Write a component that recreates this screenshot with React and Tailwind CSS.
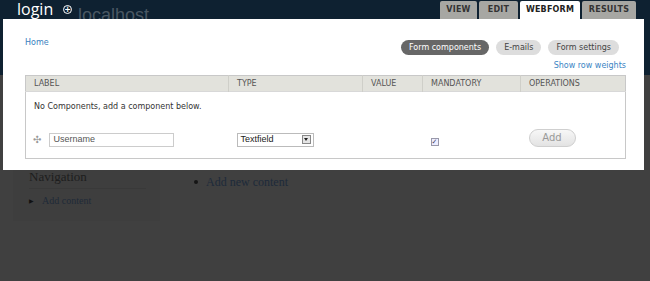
import React from "react";

const tabs = [
  { label: "VIEW", w: "w-[37px]" },
  { label: "EDIT", w: "w-[39px]" },
  { label: "WEBFORM", w: "w-[60px]", active: true },
  { label: "RESULTS", w: "w-[54px]" },
];

const App = () => {
  return (
    <div className="relative w-[650px] h-[281px] overflow-hidden bg-[#404040]">
      {/* page behind the overlay */}
      <div className="h-[75px] bg-[#0e2131] pl-[78px] pt-[3px]">
        <span className="text-[18px] leading-[22px] text-[#4a5863] font-['Liberation_Sans',sans-serif]">
          localhost
        </span>
      </div>
      <div className="flex pt-[93px] font-['Liberation_Serif',serif]">
        <div className="ml-[13px] w-[147px] h-[53px] bg-[#3e3e3e] pl-[16px] pr-[14px]">
          <div className="text-[13px] leading-[16px] text-[#1d1d1d] border-b border-[#393939] pb-[3px] pt-[1px]">
            Navigation
          </div>
          <div className="flex items-center gap-[8px] mt-[5px] text-[10px] leading-[14px] text-[#1f2a38]">
            <span className="text-[6px] text-[#111]">▶</span>
            <span>Add content</span>
          </div>
        </div>
        <div className="ml-[34px] flex items-center gap-[8px] text-[12px] leading-[16px] text-[#1d2a3a] h-[16px] mt-[6px]">
          <span className="w-[4px] h-[4px] rounded-full bg-[#151515]"></span>
          <span>Add new content</span>
        </div>
      </div>

      {/* overlay */}
      <div className="absolute top-0 left-0 w-[650px] font-['DejaVu_Sans',sans-serif]">
        <div className="h-[19px] flex items-end">
          <div className="flex items-center h-[19px] pl-[17px]">
            <span className="text-[16px] leading-[18px] text-white font-['Open_Sans',sans-serif] -mt-[2px]">login</span>
            <span className="ml-[10px] w-[9px] h-[9px] rounded-full border border-white flex items-center justify-center text-white text-[8px] leading-none font-bold">
              +
            </span>
          </div>
          <div className="ml-auto mr-[14px] flex gap-[2px] h-[18px]">
            {tabs.map((t) => (
              <div
                key={t.label}
                className={`${t.w} h-[18px] flex items-center justify-center text-[8px] font-bold tracking-[0.2px] rounded-t-[2px] ${
                  t.active ? "bg-white text-[#222]" : "bg-[#a7a7a3] text-[#333]"
                }`}
              >
                {t.label}
              </div>
            ))}
          </div>
        </div>
        <div className="ml-[3px] w-[641px] h-[151px] bg-white pl-[22px] pr-[18px] pt-[17px]">
          <div className="flex items-start">
            <a className="text-[8px] leading-[12px] text-[#3a7fbe] mt-[1px]">Home</a>
            <div className="ml-auto mr-[7px] flex gap-[7px] text-[8px] mt-[4px]">
              <span className="h-[15px] px-[8px] rounded-full bg-[#676767] text-white flex items-center">Form components</span>
              <span className="h-[15px] px-[8px] rounded-full bg-[#dddddd] text-[#444] flex items-center">E-mails</span>
              <span className="h-[15px] px-[8px] rounded-full bg-[#dddddd] text-[#444] flex items-center">Form settings</span>
            </div>
          </div>
          <div className="flex justify-end mt-[5px] h-[12px] text-[8px] text-[#3a85c4] leading-[12px]">
            Show row weights
          </div>
          <table className="w-[601px] mt-[3px] border border-[#c8c8c8] border-collapse text-[8px] text-[#333]">
            <thead>
              <tr className="bg-[#e2e2dc] h-[16px] text-left text-[#555] uppercase">
                <th className="w-[203px] font-normal pl-[8px] border-r border-[#cfcfc9]">Label</th>
                <th className="w-[134px] font-normal pl-[8px] border-r border-[#cfcfc9]">Type</th>
                <th className="w-[60px] font-normal pl-[8px] border-r border-[#cfcfc9]">Value</th>
                <th className="w-[98px] font-normal pl-[8px] border-r border-[#cfcfc9]">Mandatory</th>
                <th className="font-normal pl-[8px]">Operations</th>
              </tr>
            </thead>
            <tbody>
              <tr className="h-[29px] border-t border-[#d8d8d8]">
                <td colSpan={5} className="pl-[8px] pt-[2px]">No Components, add a component below.</td>
              </tr>
              <tr className="h-[38px]">
                <td className="pl-[7px]">
                  <div className="flex items-center gap-[8px] mt-[1px]">
                    <span className="text-[10px] text-[#999]">✣</span>
                    <div className="w-[125px] h-[14px] border border-[#ccc] pl-[3px] flex items-center text-[9px] text-[#555] font-['Liberation_Sans',sans-serif]">
                      Username
                    </div>
                  </div>
                </td>
                <td className="pl-[8px]">
                  <div className="w-[77px] h-[14px] border border-[#bbb] flex items-center justify-between pl-[3px] pr-[2px] mt-[1px] text-[9px] text-[#222] font-['Liberation_Sans',sans-serif]">
                    Textfield
                    <span className="w-[9px] h-[9px] border border-[#888] bg-[#e5e5e5] flex items-center justify-center">
                      <span className="w-0 h-0 border-l-[2px] border-r-[2px] border-t-[3px] border-l-transparent border-r-transparent border-t-[#222]"></span>
                    </span>
                  </div>
                </td>
                <td></td>
                <td className="pl-[8px]">
                  <div className="w-[8px] h-[8px] border border-[#99a] bg-[#eef] flex items-center justify-center text-[7px] leading-none text-[#446] mt-[6px]">
                    ✓
                  </div>
                </td>
                <td className="pl-[8px]">
                  <div className="w-[47px] h-[18px] rounded-full border border-[#cfcfcf] bg-gradient-to-b from-[#f7f7f7] to-[#e3e3e3] flex items-center justify-center text-[10px] text-[#999] -mt-[3px]">
                    Add
                  </div>
                </td>
              </tr>
            </tbody>
          </table>
        </div>
      </div>
    </div>
  );
};

export default App;
